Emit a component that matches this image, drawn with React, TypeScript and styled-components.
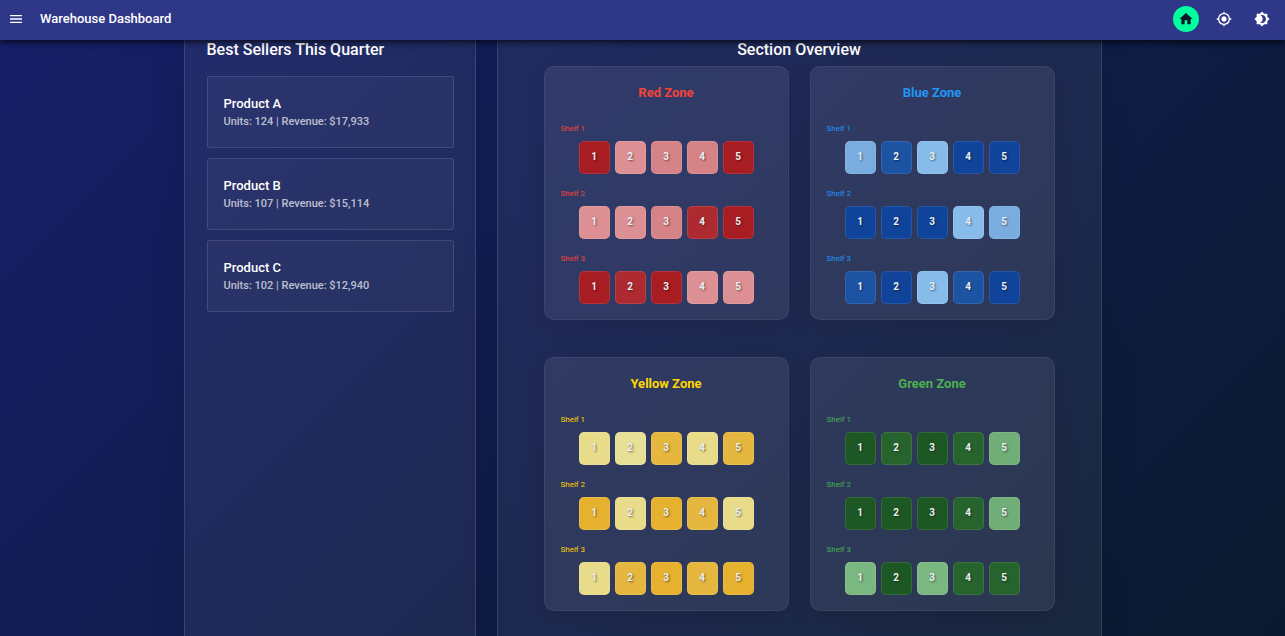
import React from 'react';
import styled, { createGlobalStyle } from 'styled-components';
import { MdMenu, MdHome, MdMyLocation, MdBrightness4 } from 'react-icons/md';

const GlobalStyle = createGlobalStyle`
  *, *::before, *::after { box-sizing: border-box; }
  body {
    margin: 0;
    font-family: Roboto, "Liberation Sans", sans-serif;
    color: #fff;
    background: #0a1929;
  }
  h1, h2, h3, h4, p, ul { margin: 0; padding: 0; }
  ul { list-style: none; }
`;

const Page = styled.div`
  min-height: 100vh;
  display: flex;
  flex-direction: column;
  background: linear-gradient(135deg, #171f69 0%, #0a1a2e 100%);
`;

const TopBar = styled.header`
  position: sticky;
  top: 0;
  z-index: 2;
  height: 40px;
  padding: 0 10px 3px 3px;
  display: flex;
  align-items: center;
  background: #2f3789;
  box-shadow: 0 2px 4px -1px rgba(0, 0, 0, 0.5), 0 4px 5px rgba(0, 0, 0, 0.24), 0 1px 10px rgba(0, 0, 0, 0.2);
`;

const IconButton = styled.button<{ $active?: boolean }>`
  width: 26px;
  height: 26px;
  padding: 0;
  border: 0;
  border-radius: 50%;
  display: flex;
  align-items: center;
  justify-content: center;
  font-size: 16px;
  cursor: pointer;
  color: ${p => (p.$active ? '#0a1929' : '#fff')};
  background: ${p => (p.$active ? '#00ff9d' : 'transparent')};
`;

const AppTitle = styled.h1`
  flex: 1;
  margin-left: 11px;
  font-size: 13px;
  line-height: 20px;
  font-weight: 500;
`;

const Actions = styled.nav`
  display: flex;
  gap: 12px;
`;

const Content = styled.main`
  flex: 1;
  width: 100%;
  max-width: 918px;
  margin: 0 auto;
  display: grid;
  grid-template-columns: 292fr 605fr;
  gap: 21px;
`;

const Panel = styled.section`
  min-width: 0;
  border: solid rgba(255, 255, 255, 0.12);
  border-width: 0 1px;
  background: rgba(255, 255, 255, 0.06);
  box-shadow: 0 8px 32px rgba(0, 0, 0, 0.1);
`;

const SellersPanel = styled(Panel)`
  padding: 0 21px 21px 22px;
`;

const OverviewPanel = styled(Panel)`
  padding: 0 46px 25px;
`;

const PanelTitle = styled.h2<{ $center?: boolean }>`
  font-size: 16px;
  line-height: 20px;
  font-weight: 500;
  text-align: ${p => (p.$center ? 'center' : 'left')};
`;

const ProductList = styled.ul`
  margin-top: 16px;
  display: grid;
  gap: 10px;
`;

const Product = styled.li`
  padding: 18px 16px 16px;
  border: 1px solid rgba(255, 255, 255, 0.12);
  border-radius: 3px;
  background: rgba(255, 255, 255, 0.04);
`;

const ProductName = styled.h3`
  font-size: 13px;
  line-height: 18px;
  font-weight: 500;
`;

const ProductStats = styled.p`
  font-size: 11px;
  line-height: 18px;
  font-weight: 500;
  color: rgba(255, 255, 255, 0.7);
`;

const ZoneGrid = styled.div`
  margin-top: 6px;
  display: grid;
  grid-template-columns: 1fr 1fr;
  gap: 37px 21px;
`;

const ZoneCard = styled.article<{ $color: string }>`
  padding: 16px 16px 15px;
  border: 1px solid rgba(255, 255, 255, 0.06);
  border-radius: 10px;
  color: ${p => p.$color};
  background: rgba(255, 255, 255, 0.08);
  box-shadow: 0 6px 25px rgba(0, 0, 0, 0.1);
`;

const ZoneTitle = styled.h3`
  margin-bottom: 20px;
  font-size: 13px;
  line-height: 19px;
  font-weight: 700;
  text-align: center;
`;

const Shelf = styled.div`
  & + & {
    margin-top: 13px;
  }
`;

const ShelfName = styled.h4`
  margin-bottom: 6px;
  font-size: 8px;
  line-height: 13px;
  font-weight: 400;
`;

const Cells = styled.div`
  display: flex;
  justify-content: center;
  gap: 5px;
`;

const Cell = styled.div<{ $fill: string }>`
  width: 31px;
  height: 33px;
  padding-bottom: 1px;
  border: 1px solid rgba(255, 255, 255, 0.1);
  border-radius: 5px;
  display: flex;
  align-items: center;
  justify-content: center;
  font-size: 10px;
  line-height: 14px;
  font-weight: 700;
  color: #eceef2;
  text-shadow: 1px 1px 2px rgba(0, 0, 0, 0.5);
  background: ${p => p.$fill};
`;

interface Zone {
  name: string;
  color: string;
  shelves: string[][];
}

const red = { a: '#a81d22', b: '#ad2b30', c: '#d68387', d: '#dc9094' };
const blue = { a: '#0f449a', b: '#1d53a3', c: '#79addf', d: '#87bbe9' };
const yellow = { a: '#e6b12f', b: '#e5b73e', c: '#e8dc8a', d: '#e8e096' };
const green = { a: '#1d5824', b: '#27642d', c: '#70ad77', d: '#7bb780' };

const zones: Zone[] = [
  {
    name: 'Red Zone',
    color: '#f44336',
    shelves: [
      [red.a, red.d, red.c, red.c, red.a],
      [red.d, red.d, red.c, red.b, red.a],
      [red.a, red.b, red.a, red.d, red.d],
    ],
  },
  {
    name: 'Blue Zone',
    color: '#2196f3',
    shelves: [
      [blue.c, blue.b, blue.d, blue.a, blue.a],
      [blue.a, blue.a, blue.a, blue.d, blue.c],
      [blue.b, blue.a, blue.d, blue.b, blue.a],
    ],
  },
  {
    name: 'Yellow Zone',
    color: '#ffd600',
    shelves: [
      [yellow.c, yellow.d, yellow.b, yellow.c, yellow.b],
      [yellow.a, yellow.c, yellow.a, yellow.b, yellow.c],
      [yellow.c, yellow.b, yellow.a, yellow.b, yellow.a],
    ],
  },
  {
    name: 'Green Zone',
    color: '#4caf50',
    shelves: [
      [green.a, green.b, green.a, green.b, green.c],
      [green.a, green.a, green.a, green.b, green.c],
      [green.d, green.a, green.d, green.b, green.b],
    ],
  },
];

const products = [
  { name: 'Product A', units: 124, revenue: '$17,933' },
  { name: 'Product B', units: 107, revenue: '$15,114' },
  { name: 'Product C', units: 102, revenue: '$12,940' },
];

export default function App() {
  return (
    <Page>
      <GlobalStyle />
      <TopBar>
        <IconButton aria-label="Open menu"><MdMenu /></IconButton>
        <AppTitle>Warehouse Dashboard</AppTitle>
        <Actions>
          <IconButton $active aria-label="Home"><MdHome /></IconButton>
          <IconButton aria-label="Locate"><MdMyLocation /></IconButton>
          <IconButton aria-label="Toggle theme"><MdBrightness4 /></IconButton>
        </Actions>
      </TopBar>
      <Content>
        <SellersPanel>
          <PanelTitle>Best Sellers This Quarter</PanelTitle>
          <ProductList>
            {products.map(p => (
              <Product key={p.name}>
                <ProductName>{p.name}</ProductName>
                <ProductStats>{`Units: ${p.units} | Revenue: ${p.revenue}`}</ProductStats>
              </Product>
            ))}
          </ProductList>
        </SellersPanel>
        <OverviewPanel>
          <PanelTitle $center>Section Overview</PanelTitle>
          <ZoneGrid>
            {zones.map(zone => (
              <ZoneCard key={zone.name} $color={zone.color}>
                <ZoneTitle>{zone.name}</ZoneTitle>
                {zone.shelves.map((cells, s) => (
                  <Shelf key={s}>
                    <ShelfName>{`Shelf ${s + 1}`}</ShelfName>
                    <Cells>
                      {cells.map((fill, c) => (
                        <Cell key={c} $fill={fill}>{c + 1}</Cell>
                      ))}
                    </Cells>
                  </Shelf>
                ))}
              </ZoneCard>
            ))}
          </ZoneGrid>
        </OverviewPanel>
      </Content>
    </Page>
  );
}
